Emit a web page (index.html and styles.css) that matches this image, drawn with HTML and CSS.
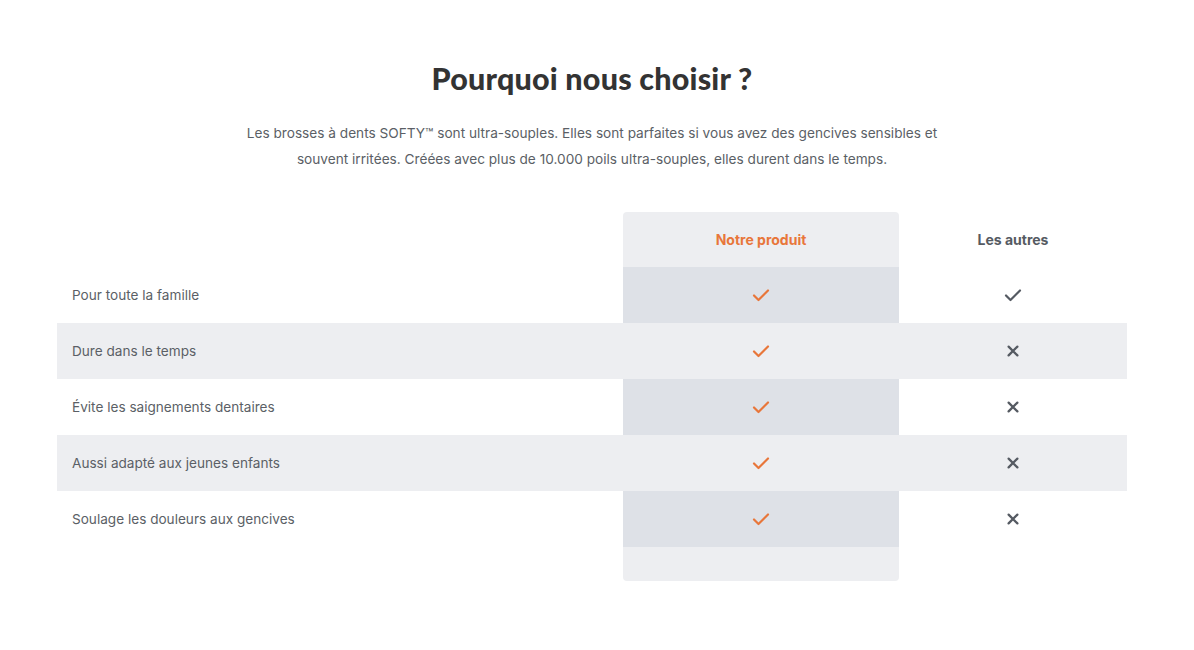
FILE: index.html
```html
<!DOCTYPE html>
<html lang="fr">
<head>
  <meta charset="UTF-8">
  <title>Pourquoi nous choisir ?</title>
  <link rel="stylesheet" href="styles.css">
</head>
<body>
  <section class="why">
    <h2 class="why-title">Pourquoi nous choisir ?</h2>
    <p class="why-text">Les brosses à dents SOFTY™ sont ultra-souples. Elles sont parfaites si vous avez des gencives sensibles et souvent irritées. Créées avec plus de 10.000 poils ultra-souples, elles durent dans le temps.</p>

    <div class="compare">
      <div class="row head">
        <div class="cell label"></div>
        <div class="cell ours">Notre produit</div>
        <div class="cell others">Les autres</div>
      </div>

      <div class="row">
        <div class="cell label">Pour toute la famille</div>
        <div class="cell ours"><svg class="ico check-o" viewBox="0 0 20 20"><path d="M3 10.5l4.5 4.5L17 5.5"/></svg></div>
        <div class="cell others"><svg class="ico check-g" viewBox="0 0 20 20"><path d="M3 10.5l4.5 4.5L17 5.5"/></svg></div>
      </div>

      <div class="row striped">
        <div class="cell label">Dure dans le temps</div>
        <div class="cell ours"><svg class="ico check-o" viewBox="0 0 20 20"><path d="M3 10.5l4.5 4.5L17 5.5"/></svg></div>
        <div class="cell others"><svg class="ico cross" viewBox="0 0 20 20"><path d="M4.5 4.5l11 11M15.5 4.5l-11 11"/></svg></div>
      </div>

      <div class="row">
        <div class="cell label">Évite les saignements dentaires</div>
        <div class="cell ours"><svg class="ico check-o" viewBox="0 0 20 20"><path d="M3 10.5l4.5 4.5L17 5.5"/></svg></div>
        <div class="cell others"><svg class="ico cross" viewBox="0 0 20 20"><path d="M4.5 4.5l11 11M15.5 4.5l-11 11"/></svg></div>
      </div>

      <div class="row striped">
        <div class="cell label">Aussi adapté aux jeunes enfants</div>
        <div class="cell ours"><svg class="ico check-o" viewBox="0 0 20 20"><path d="M3 10.5l4.5 4.5L17 5.5"/></svg></div>
        <div class="cell others"><svg class="ico cross" viewBox="0 0 20 20"><path d="M4.5 4.5l11 11M15.5 4.5l-11 11"/></svg></div>
      </div>

      <div class="row">
        <div class="cell label">Soulage les douleurs aux gencives</div>
        <div class="cell ours"><svg class="ico check-o" viewBox="0 0 20 20"><path d="M3 10.5l4.5 4.5L17 5.5"/></svg></div>
        <div class="cell others"><svg class="ico cross" viewBox="0 0 20 20"><path d="M4.5 4.5l11 11M15.5 4.5l-11 11"/></svg></div>
      </div>

      <div class="row foot">
        <div class="cell label"></div>
        <div class="cell ours"></div>
        <div class="cell others"></div>
      </div>
    </div>
  </section>
</body>
</html>
```

FILE: styles.css
```css
body {
  margin: 0;
  padding: 0;
  background-color: #ffffff;
  font-family: Inter, 'Noto Sans', sans-serif;
  color: #5b5f66;
}

.why {
  width: 1070px;
  margin-left: 57px;
  padding-top: 58px;
}

.why-title {
  margin: 0;
  text-align: center;
  font-family: Lato, sans-serif;
  font-weight: 900;
  font-size: 30.5px;
  line-height: 40px;
  color: #333333;
  letter-spacing: 0.2px;
}

.why-text {
  max-width: 710px;
  margin: 22px auto 0;
  text-align: center;
  font-size: 13.65px;
  line-height: 26px;
  color: #5b5f66;
}

.compare {
  margin-top: 40px;
}

.row {
  display: grid;
  grid-template-columns: 566px 276px 228px;
  height: 56px;
}

.cell {
  display: flex;
  align-items: center;
  justify-content: center;
  font-size: 14px;
}

.cell.label {
  justify-content: flex-start;
  padding-left: 15px;
  font-size: 13.6px;
  color: #5b5f66;
}

.row .ours {
  background-color: #dee1e7;
}

.row.striped {
  background-color: #edeef1;
}

.row.striped .ours {
  background-color: #edeef1;
}

.row.head {
  height: 55px;
}

.row.head .ours {
  background-color: #edeef1;
  border-radius: 4px 4px 0 0;
  color: #e8763a;
  font-weight: 700;
}

.row.head .others {
  color: #555a62;
  font-weight: 700;
}

.row.foot {
  height: 34px;
}

.row.foot .ours {
  background-color: #edeef1;
  border-radius: 0 0 4px 4px;
}

.ico {
  width: 20px;
  height: 20px;
  fill: none;
  stroke-width: 2.2;
  stroke-linecap: round;
  stroke-linejoin: round;
}

.check-o {
  stroke: #e8763a;
}

.check-g {
  stroke: #555a62;
}

.cross {
  width: 16px;
  height: 16px;
  stroke: #555a62;
  stroke-width: 2.8;
}
```
